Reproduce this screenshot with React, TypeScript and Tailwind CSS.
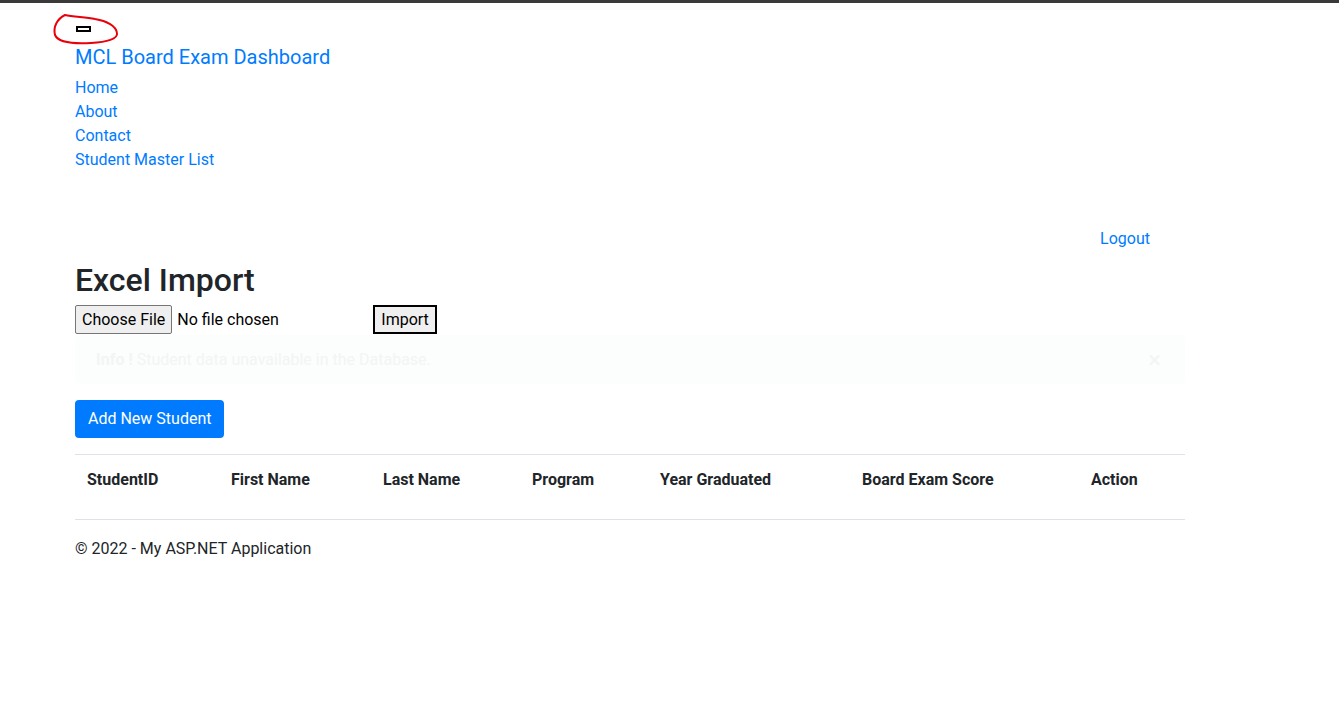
export default function App() {
  const cols = [
    { label: "StudentID", w: "w-[144px]" },
    { label: "First Name", w: "w-[152px]" },
    { label: "Last Name", w: "w-[149px]" },
    { label: "Program", w: "w-[128px]" },
    { label: "Year Graduated", w: "w-[202px]" },
    { label: "Board Exam Score", w: "w-[229px]" },
    { label: "Action", w: "w-[106px]" },
  ];

  return (
    <div className="relative min-h-screen bg-white text-[#212529] font-['Roboto',sans-serif] text-[16px]">
      <div className="h-[3px] bg-[#3a3a3a]" />

      {/* red annotation around the collapsed toggler */}
      <svg className="absolute left-[51px] top-[11px]" width="70" height="36" viewBox="0 0 70 36" fill="none">
        <path
          d="M14 4 C6 8 2 16 4 24 C7 31 22 33 40 32 C56 31 67 28 66 22 C65 15 56 10 44 8 C34 6 22 6 14 4"
          stroke="#e8000b"
          strokeWidth="2"
          strokeLinecap="round"
        />
      </svg>

      <div className="ml-[75px] w-[1110px]">
        {/* navbar toggler */}
        <div className="mt-[23px] ml-[1px] h-[6px] w-[15px] border-2 border-black" />

        <a className="mt-[10px] block text-[20px] leading-[30px] text-[#007bff]">MCL Board Exam Dashboard</a>

        <ul className="mt-[4px]">
          {["Home", "About", "Contact", "Student Master List"].map((l) => (
            <li key={l} className="leading-[24px] text-[#007bff]">
              {l}
            </li>
          ))}
        </ul>

        <div className="mt-[55px] flex justify-end pr-[35px] leading-[24px] text-[#007bff]">Logout</div>

        <h2 className="mt-[10px] text-[32px] font-medium leading-[38px]">Excel Import</h2>

        <div className="mt-[6px] flex h-[30px] items-start">
          <button className="h-[29px] rounded-[2px] border border-[#767676] bg-[#efefef] px-[6px] text-[16px] leading-[27px] text-black">
            Choose File
          </button>
          <span className="ml-[5px] w-[196px] text-[16px] leading-[29px] text-black">No file chosen</span>
          <button className="h-[29px] border-2 border-black bg-[#efefef] px-[6px] text-[16px] leading-[25px] text-black">
            Import
          </button>
        </div>

        <div className="flex h-[49px] items-center justify-between rounded-[4px] bg-[#fbfefc] pl-[21px] pr-[24px] text-[#f2f5f3]">
          <span>
            <strong className="font-bold">Info !</strong> Student data unavailable in the Database.
          </span>
          <span className="text-[24px] leading-none">×</span>
        </div>

        <button className="mt-[16px] h-[38px] rounded-[4px] bg-[#007bff] px-[13px] text-white leading-[24px]">
          Add New Student
        </button>

        <table className="mt-[16px] w-full border-collapse">
          <thead>
            <tr className="h-[65px] border-y border-[#dee2e6]">
              {cols.map((c) => (
                <th key={c.label} className={`${c.w} pl-[12px] pt-[13px] align-top text-left font-bold leading-[24px]`}>
                  {c.label}
                </th>
              ))}
            </tr>
          </thead>
        </table>

        <footer className="mt-[17px] leading-[24px]">© 2022 - My ASP.NET Application</footer>
      </div>
    </div>
  );
}
